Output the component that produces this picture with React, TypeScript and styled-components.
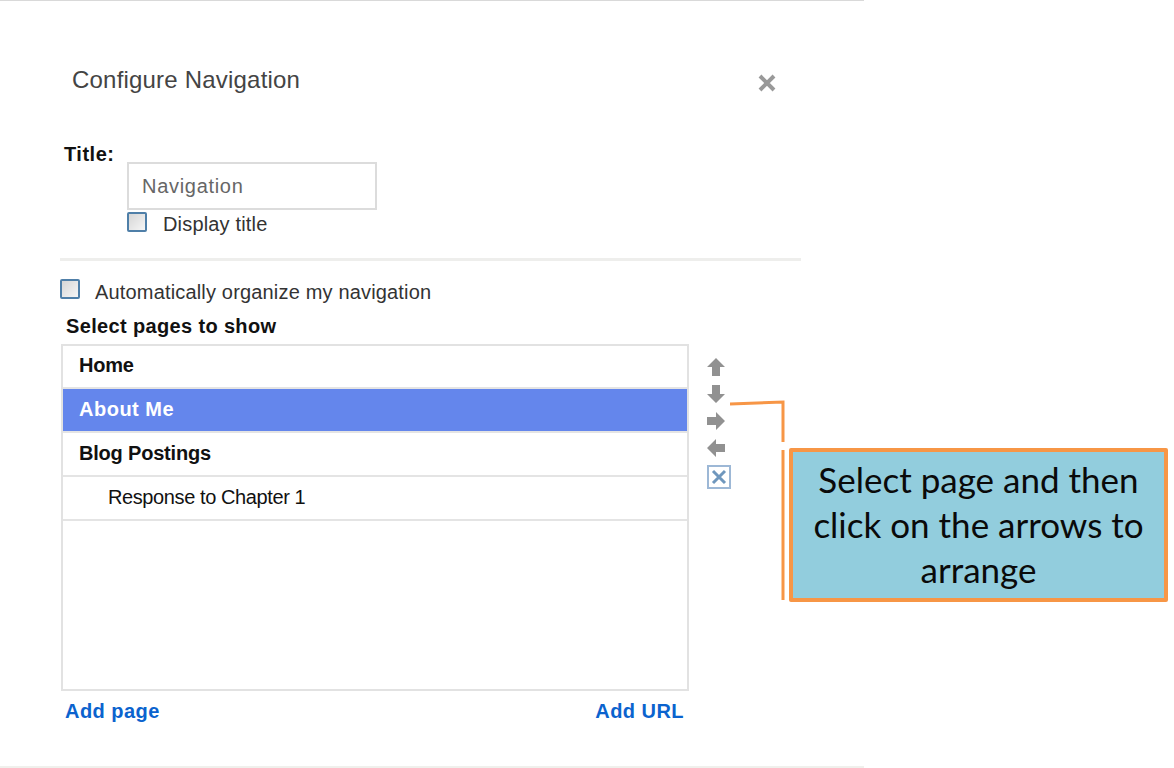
import styled, { createGlobalStyle } from 'styled-components'

const GlobalStyle = createGlobalStyle`
  html, body {
    margin: 0;
    padding: 0;
    background: #fff;
    overflow: hidden;
  }
`

const Page = styled.div`
  position: relative;
  width: 1174px;
  height: 768px;
  overflow: hidden;
  font-family: 'Liberation Sans', Arial, sans-serif;
  color: #222;
`

const Dialog = styled.div`
  box-sizing: border-box;
  width: 864px;
  height: 768px;
  padding: 0 63px 0 60px;
  border-top: 1px solid #d9d9d9;
  border-bottom: 2px solid #f0f0ec;
  display: flex;
  flex-direction: column;
`

const Header = styled.header`
  display: flex;
  justify-content: space-between;
  align-items: center;
  height: 48px;
  margin-top: 55px;
  padding: 0 24px 0 12px;
`

const Heading = styled.h1`
  margin: 0;
  font-size: 24px;
  font-weight: 400;
  color: #444;
  letter-spacing: 0.2px;
`

const CloseIcon = styled.svg`
  width: 20px;
  height: 20px;
  margin-top: 6px;
`

const TitleLabel = styled.label`
  display: block;
  margin: 39px 0 0 4px;
  height: 19px;
  line-height: 23px;
  font-size: 20px;
  font-weight: 700;
  letter-spacing: 0.5px;
  color: #111;
`

const TitleFields = styled.div`
  display: flex;
  flex-direction: column;
  margin-left: 67px;
`

const TitleInput = styled.div`
  box-sizing: border-box;
  width: 250px;
  height: 48px;
  padding-left: 13px;
  border: 2px solid #dcdcdc;
  font-size: 20px;
  line-height: 44px;
  color: #666;
  letter-spacing: 0.7px;
`

const CheckRow = styled.div<{ $gap: number }>`
  display: flex;
  align-items: center;
  gap: ${(p) => p.$gap}px;
  height: 28px;
  font-size: 20px;
  color: #333;
  letter-spacing: 0.17px;
`

const CheckBox = styled.span<{ $lift: number }>`
  box-sizing: border-box;
  flex: none;
  width: 20px;
  height: 20px;
  margin-top: ${(p) => -p.$lift}px;
  border: 2px solid #4f7fa8;
  border-radius: 2px;
  background: linear-gradient(135deg, #d6d6d6, #f6f6f6);
`

const Divider = styled.hr`
  width: 100%;
  height: 3px;
  margin: 20px 0 17px;
  border: 0;
  background: #eeeeec;
`

const SectionLabel = styled.div`
  margin: 8px 0 6px 6px;
  height: 24px;
  line-height: 24px;
  font-size: 20px;
  font-weight: 700;
  letter-spacing: 0.35px;
  color: #111;
`

const ListArea = styled.div`
  display: flex;
  align-items: flex-start;
`

const ListColumn = styled.div`
  width: 628px;
  flex: none;
  margin-left: 1px;
`

const PageList = styled.ul`
  box-sizing: border-box;
  height: 347px;
  margin: 0;
  padding: 0;
  list-style: none;
  border: 2px solid #e2e2e2;
`

const PageRow = styled.li<{ $selected?: boolean; $child?: boolean }>`
  box-sizing: border-box;
  height: 44px;
  padding-left: ${(p) => (p.$child ? 45 : 16)}px;
  line-height: 40px;
  font-size: 20px;
  font-weight: ${(p) => (p.$child ? 400 : 700)};
  letter-spacing: ${(p) => (p.$child ? -0.4 : p.$selected ? 0.5 : -0.2)}px;
  color: ${(p) => (p.$selected ? '#fff' : '#111')};
  background: ${(p) => (p.$selected ? '#6486ec' : 'transparent')};
  border-bottom: 2px solid #e4e4e4;

  &:first-child {
    height: 43px;
    line-height: 38px;
  }
`

const LinkRow = styled.div`
  display: flex;
  justify-content: space-between;
  padding: 6px 5px 0 4px;
`

const ActionLink = styled.a`
  font-size: 20px;
  font-weight: 700;
  line-height: 28px;
  color: #0b63ce;
  letter-spacing: 0.45px;
`

const ArrowColumn = styled.div`
  display: flex;
  flex-direction: column;
  align-items: flex-start;
  gap: 7px;
  margin: 13px 0 0 17px;
`

const ArrowIcon = styled.svg`
  display: block;
  width: 20px;
  height: 20px;
  fill: #919191;
`

const RemoveIcon = styled.svg`
  display: block;
  width: 24px;
  height: 24px;
  margin-left: 1px;
`

const Leader = styled.svg`
  position: absolute;
  left: 728px;
  top: 398px;
  width: 60px;
  height: 204px;
`

const Callout = styled.div`
  position: absolute;
  left: 789px;
  top: 448px;
  box-sizing: border-box;
  width: 379px;
  height: 154px;
  padding: 5px 4px 0;
  background: #92cddd;
  border: 4px solid #f79646;
  border-radius: 2px;
  font-family: Lato, 'Open Sans', sans-serif;
  font-size: 35px;
  line-height: 45px;
  text-align: center;
  color: #0a0a0a;
`

const arrows = [
  'M10 1 L19 10 L14 10 L14 19 L6 19 L6 10 L1 10 Z',
  'M6 1 L14 1 L14 10 L19 10 L10 19 L1 10 L6 10 Z',
  'M1 6 L10 6 L10 1 L19 10 L10 19 L10 14 L1 14 Z',
  'M19 6 L10 6 L10 1 L1 10 L10 19 L10 14 L19 14 Z',
]

const App = (): JSX.Element => {
  return (
    <Page>
      <GlobalStyle />
      <Dialog>
        <Header>
          <Heading>Configure Navigation</Heading>
          <CloseIcon viewBox='0 0 20 20'>
            <path d='M3 3 L17 17 M17 3 L3 17' stroke='#999' strokeWidth='4' />
          </CloseIcon>
        </Header>
        <TitleLabel>Title:</TitleLabel>
        <TitleFields>
          <TitleInput>Navigation</TitleInput>
          <CheckRow $gap={16}>
            <CheckBox $lift={4} />
            Display title
          </CheckRow>
        </TitleFields>
        <Divider />
        <CheckRow $gap={15}>
          <CheckBox $lift={6} />
          Automatically organize my navigation
        </CheckRow>
        <SectionLabel>Select pages to show</SectionLabel>
        <ListArea>
          <ListColumn>
            <PageList>
              <PageRow>Home</PageRow>
              <PageRow $selected>About Me</PageRow>
              <PageRow>Blog Postings</PageRow>
              <PageRow $child>Response to Chapter 1</PageRow>
            </PageList>
            <LinkRow>
              <ActionLink>Add page</ActionLink>
              <ActionLink>Add URL</ActionLink>
            </LinkRow>
          </ListColumn>
          <ArrowColumn>
            {arrows.map((d) => (
              <ArrowIcon key={d} viewBox='0 0 20 20'>
                <path d={d} />
              </ArrowIcon>
            ))}
            <RemoveIcon viewBox='0 0 24 24'>
              <rect x='1' y='1' width='22' height='22' fill='#fff' stroke='#9db8d6' strokeWidth='2' />
              <path d='M6 6 L18 18 M18 6 L6 18' stroke='#6f97bd' strokeWidth='3' />
            </RemoveIcon>
          </ArrowColumn>
        </ListArea>
      </Dialog>
      <Leader viewBox='0 0 60 204'>
        <path
          d='M2 6 L55 4 L55 44 M55 52 L55 202'
          fill='none'
          stroke='#f79646'
          strokeWidth='3'
        />
      </Leader>
      <Callout>
        Select page and then
        <br />
        click on the arrows to
        <br />
        arrange
      </Callout>
    </Page>
  )
}

export default App
